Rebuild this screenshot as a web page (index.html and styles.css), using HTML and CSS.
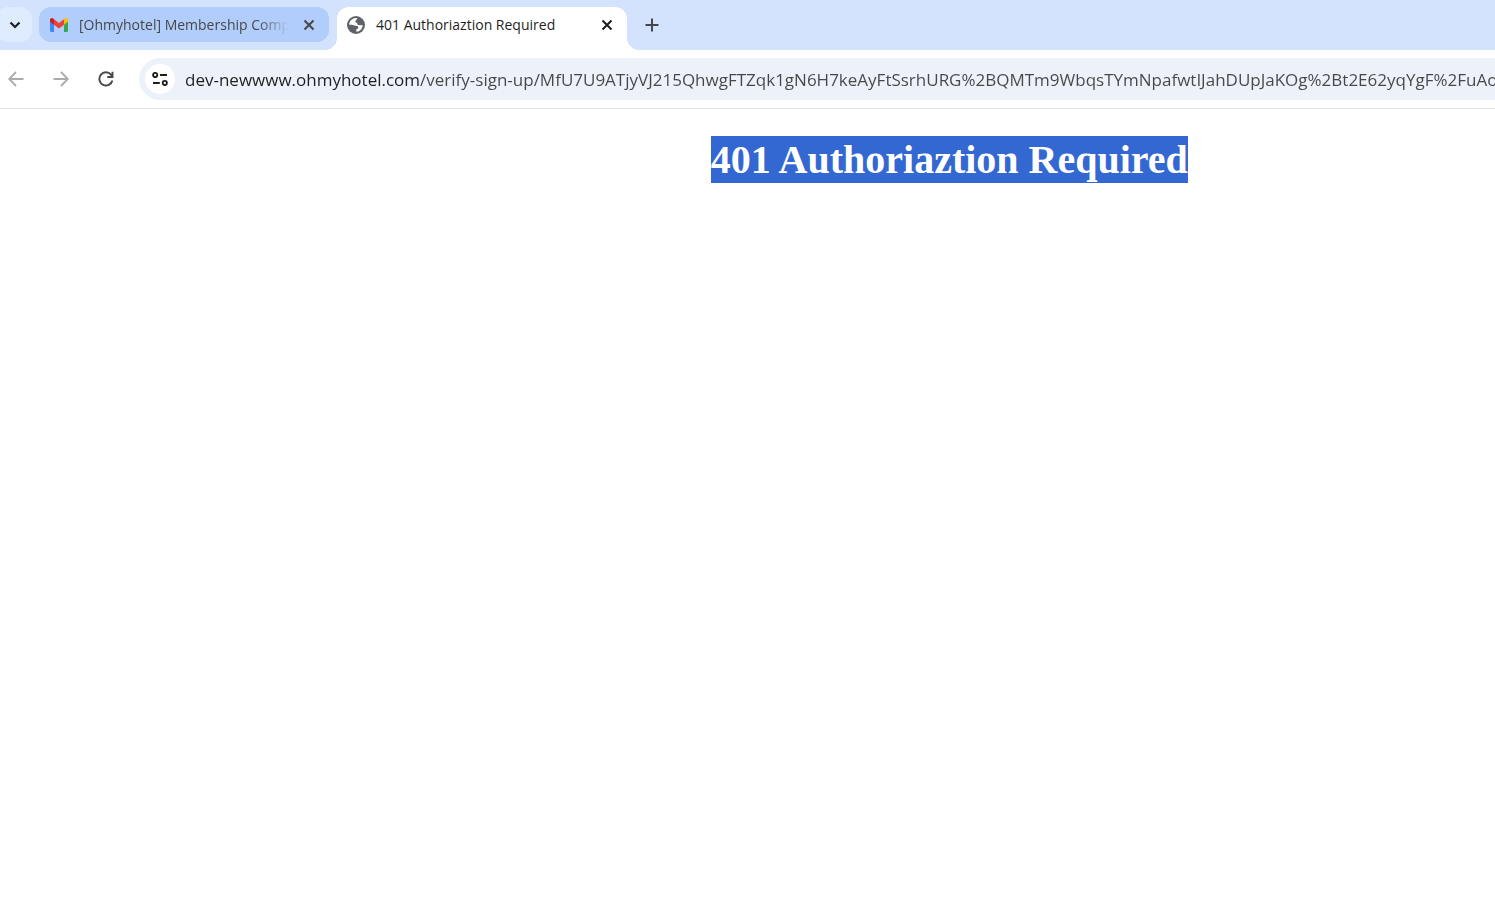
FILE: index.html
```html
<!DOCTYPE html>
<html lang="en">
<head>
  <meta charset="utf-8">
  <meta name="viewport" content="width=device-width, initial-scale=1.0">
  <title>401 Authoriaztion Required</title>
  <link rel="stylesheet" href="styles.css">
</head>
<body>
  <div class="browser">
    <!-- Tab strip -->
    <header class="tab-strip">
      <button class="tab-search" type="button" aria-label="Search tabs">
        <svg width="12" height="12" viewBox="0 0 12 12"><path d="M1.500 3.500 6 8l4.500-4.500" fill="none" stroke="#1f1f1f" stroke-width="2.200"/></svg>
      </button>

      <div class="tab">
        <svg class="tab-icon" width="18" height="14" viewBox="0 0 18 14">
          <path d="M0 2v10.800C0 13.500.5 14 1.200 14H4V5z" fill="#4285f4"/>
          <path d="M14 5v9h2.800c.7 0 1.200-.5 1.200-1.200V2z" fill="#34a853"/>
          <path d="M14 1.200V6.800l4-3V2c0-1.800-2-2.600-3.300-1.500z" fill="#fbbc04"/>
          <path d="M4 6.800V1.200l5 3.700 5-3.700v5.600l-5 3.700z" fill="#ea4335"/>
          <path d="M0 2v1.800l4 3V1.200L3.300.5C2-.6 0 .2 0 2z" fill="#c5221f"/>
        </svg>
        <span class="tab-title faded">[Ohmyhotel] Membership Completed</span>
        <button class="tab-close" type="button" aria-label="Close tab">
          <svg width="12" height="12" viewBox="0 0 12 12"><path d="m1.500 1.500 9 9m0-9-9 9" stroke="currentColor" stroke-width="2"/></svg>
        </button>
      </div>

      <div class="tab active">
        <svg class="tab-icon" width="18" height="18" viewBox="0 0 18 18">
          <circle cx="9" cy="9" r="9" fill="#5f6368"/>
          <path d="M10.500 2.200 8.800 4.500 8 6l2.200 1 .3 1.800 2.300.4 2.900-.2c0 3.700-2.800 6.600-6.400 6.800v-2.300l2.200-1.600-.6-1.700-3.500-.7L5 8.800H2.200C2.300 4.700 6 1.400 10.500 2.200z" fill="#fff"/>
        </svg>
        <span class="tab-title">401 Authoriaztion Required</span>
        <button class="tab-close" type="button" aria-label="Close tab">
          <svg width="12" height="12" viewBox="0 0 12 12"><path d="m1.500 1.500 9 9m0-9-9 9" stroke="currentColor" stroke-width="2"/></svg>
        </button>
      </div>

      <button class="new-tab" type="button" aria-label="New tab">
        <svg width="14" height="14" viewBox="0 0 14 14"><path d="M7 .5v13M.5 7h13" stroke="#474747" stroke-width="2"/></svg>
      </button>
    </header>

    <!-- Toolbar -->
    <nav class="toolbar">
      <button class="nav-btn" type="button" aria-label="Back" disabled>
        <svg width="16" height="16" viewBox="0 0 16 16"><path d="M15.500 8H1.500M8 1 1.200 8 8 15" fill="none" stroke="currentColor" stroke-width="1.800"/></svg>
      </button>
      <button class="nav-btn" type="button" aria-label="Forward" disabled>
        <svg width="16" height="16" viewBox="0 0 16 16"><path d="M.5 8h14M8 1l6.800 7L8 15" fill="none" stroke="currentColor" stroke-width="1.800"/></svg>
      </button>
      <button class="nav-btn" type="button" aria-label="Reload">
        <svg width="16" height="16" viewBox="0 0 16 16"><path d="M14.400 9.500A6.600 6.600 0 1 1 13 3.600l1.300 1.700M14.500 .8v5.200H9.300" fill="none" stroke="currentColor" stroke-width="1.900"/></svg>
      </button>

      <div class="omnibox">
        <button class="site-info" type="button" aria-label="View site information">
          <svg width="16" height="14" viewBox="0 0 16 14" fill="none" stroke="#1f1f1f" stroke-width="1.900">
            <circle cx="3.200" cy="3" r="2.100"/>
            <path d="M8 3h7M1 11h6.800"/>
            <circle cx="12.800" cy="11" r="2.100"/>
          </svg>
        </button>
        <input class="url" type="text" aria-label="Address" spellcheck="false" value="dev-newwww.ohmyhotel.com/verify-sign-up/MfU7U9ATjyVJ215QhwgFTZqk1gN6H7keAyFtSsrhURG%2BQMTm9WbqsTYmNpafwtIJahDUpJaKOg%2Bt2E62yqYgF%2FuAoOQ">
      </div>
    </nav>

    <!-- Page -->
    <main class="page">
      <h1><span class="selected">401 Authoriaztion Required</span></h1>
    </main>
  </div>
</body>
</html>
```
FILE: styles.css
```css
* {
  margin: 0;
  padding: 0;
  box-sizing: border-box;
}

body {
  overflow: hidden;
  background: #fff;
  font-family: 'Segoe UI', 'Open Sans', 'Noto Sans', sans-serif;
}

button {
  border: none;
  background: none;
  display: flex;
  align-items: center;
  justify-content: center;
  flex-shrink: 0;
}

/* the window runs past the right edge of the screen */
.browser {
  width: 127vw;
}

.tab-strip {
  display: flex;
  height: 50px;
  padding-top: 7px;
  background: #d3e3fd;
}

.tab-search {
  width: 36px;
  height: 35px;
  margin-left: -4px;
  margin-right: 7px;
  padding-left: 2px;
  border-radius: 12px;
  background: #dfebfe;
}

.tab {
  display: flex;
  align-items: center;
  width: 290px;
  height: 35px;
  padding: 0 10px 0 11px;
  border-radius: 12px;
  background: #b1cdfb;
  color: #474747;
}

.tab.active {
  position: relative;
  height: 43px;
  margin-left: 8px;
  padding: 0 10px 8px;
  border-radius: 12px 12px 0 0;
  background: #fff;
  color: #1f1f1f;
}

/* curved feet of the active tab */
.tab.active::before,
.tab.active::after {
  content: '';
  position: absolute;
  bottom: 0;
  width: 12px;
  height: 12px;
}

.tab.active::before {
  left: -12px;
  background: radial-gradient(circle at 0 0, transparent 12px, #fff 12px);
}

.tab.active::after {
  right: -12px;
  background: radial-gradient(circle at 100% 0, transparent 12px, #fff 12px);
}

.tab-icon {
  flex-shrink: 0;
  margin-right: 11px;
}

.tab-title {
  flex: 1;
  overflow: hidden;
  white-space: nowrap;
  font-size: 14px;
  line-height: 20px;
}

.tab-title.faded {
  mask-image: linear-gradient(to left, transparent, #000 32px);
}

.tab-close {
  width: 20px;
  height: 20px;
  margin-left: 10px;
  color: inherit;
}

.new-tab {
  width: 28px;
  height: 35px;
  margin-left: 11px;
}

.toolbar {
  display: flex;
  align-items: center;
  height: 59px;
  border-bottom: 1px solid #e1e1e1;
}

.nav-btn {
  width: 32px;
  height: 32px;
  margin-right: 13px;
  color: #474747;
}

.nav-btn:disabled {
  color: #ababab;
}

.omnibox {
  display: flex;
  align-items: center;
  flex: 1;
  height: 42px;
  margin-left: 4px;
  margin-right: 140px;
  padding: 0 6px;
  border-radius: 21px;
  background: #ecf1fa;
}

.site-info {
  width: 30px;
  height: 30px;
  border-radius: 50%;
  background: #fff;
}

.url {
  flex: 1;
  min-width: 0;
  height: 30px;
  margin-left: 10px;
  border: none;
  outline: none;
  font-family: inherit;
  font-size: 17px;
  /* host is darker than the path */
  background: linear-gradient(to right, #1f1f1f 235px, #474747 235px);
  background-clip: text;
  color: transparent;
}

.page {
  padding: 27px 8px;
  text-align: center;
}

.page h1 {
  font-family: 'Times New Roman', 'Liberation Serif', serif;
  font-size: 40px;
  line-height: 47px;
}

.selected {
  display: inline-block;
  background: #3367d1;
  color: #fff;
}
```
